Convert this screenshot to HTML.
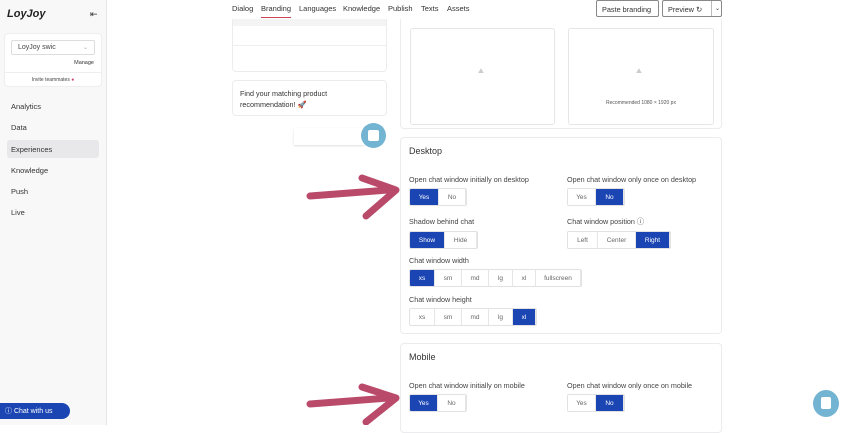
<!DOCTYPE html>
<html><head><style>
*{box-sizing:border-box;margin:0;padding:0}
body{width:848px;height:425px;overflow:hidden;background:#fff;font-family:"Liberation Sans",sans-serif;color:#333;position:relative}
.a{position:absolute;white-space:nowrap}
.side{left:0;top:0;width:107px;height:425px;background:#f8f8f9;border-right:1px solid #e6e6e8}
.card{position:absolute;background:#fff;border:1px solid #ececee;border-radius:4px}
.lbl{position:absolute;font-size:7.2px;color:#444;white-space:nowrap}
.grp{position:absolute;display:flex;height:18px;border:1px solid #e2e2e4;border-radius:2px;overflow:hidden}
.grp span{display:flex;align-items:center;justify-content:center;font-size:6.5px;color:#666;border-right:1px solid #e6e6e8;height:100%}
.grp span.on{background:#1a45b3;color:#fff}
.nav{font-size:7.5px;color:#333}
.tn{position:absolute;top:4px;font-size:7.5px;color:#333;white-space:nowrap;z-index:6}
.hdr{position:absolute;left:108px;top:0;width:740px;height:19px;background:#fff;z-index:5}
.btn{z-index:6;background:#fff}
</style></head><body>
<div class="a side">
 <div class="a" style="left:7px;top:8px;font-size:11px;font-weight:bold;font-style:italic;color:#222">LoyJoy</div>
 <div class="a" style="left:90px;top:9px;font-size:9px;color:#333">⇤</div>
 <div class="a" style="left:4px;top:33px;width:98px;height:54px;background:#fff;border:1px solid #eee;border-radius:4px">
  <div class="a" style="left:6px;top:6px;width:84px;height:15px;border:1px solid #ddd;border-radius:2px;font-size:7px;padding:3px 6px;color:#444">LoyJoy swic<span style="float:right;color:#aaa;font-size:6px">⌄</span></div>
  <div class="a" style="right:7px;top:26px;font-size:5.5px;color:#333">Manage</div>
  <div class="a" style="left:0;top:38px;width:96px;border-top:1px solid #eee;text-align:center;font-size:5px;color:#444;padding-top:4px">Invite teammates <span style="color:#c46">●</span></div>
 </div>
 <div class="a nav" style="left:11px;top:102px">Analytics</div>
 <div class="a nav" style="left:11px;top:123px">Data</div>
 <div class="a" style="left:7px;top:140px;width:92px;height:18px;background:#e8e8ea;border-radius:3px"></div>
 <div class="a nav" style="left:11px;top:145px">Experiences</div>
 <div class="a nav" style="left:11px;top:166px">Knowledge</div>
 <div class="a nav" style="left:11px;top:187px">Push</div>
 <div class="a nav" style="left:11px;top:208px">Live</div>
 <div class="a" style="left:0;top:403px;width:70px;height:16px;background:#1a45b3;border-radius:0 8px 8px 0;color:#fff;font-size:7px;padding:3px 0 0 5px">ⓘ Chat with us</div>
</div>
<div class="card" style="left:232px;top:10px;width:155px;height:62px;border-top:none"><div style="height:16px;background:#f4f4f5"></div><div style="border-top:1px solid #eee;margin-top:19px"></div></div>
<div class="card" style="left:232px;top:80px;width:155px;height:36px;font-size:7.2px;padding:7px 7px;line-height:11px;color:#333">Find your matching product recommendation! 🚀</div>
<div class="a" style="left:294px;top:128px;width:70px;height:17px;background:#fff;box-shadow:0 1px 2px #ddd"></div>
<div class="a" style="left:361px;top:123px;width:25px;height:25px;border-radius:50%;background:#72b4d2"><div class="a" style="left:7px;top:7px;width:11px;height:11px;background:#fff;border-radius:2px"></div></div>
<div class="card" style="left:400px;top:8px;width:322px;height:121px;border-top:none">
 <div class="a" style="left:9px;top:20px;width:145px;height:97px;border:1px solid #e6e6e8;border-radius:3px"><div class="a" style="left:67px;top:39px;color:#ccc;font-size:7px">⛰</div></div>
 <div class="a" style="left:167px;top:20px;width:146px;height:97px;border:1px solid #e6e6e8;border-radius:3px"><div class="a" style="left:67px;top:39px;color:#ccc;font-size:7px">⛰</div><div class="a" style="left:0;width:100%;top:71px;text-align:center;font-size:5px;color:#555">Recommended 1080 × 1920 px</div></div>
</div>
<div class="hdr"></div>
<span class="tn" style="left:232px">Dialog</span>
<span class="tn" style="left:261px;border-bottom:1px solid #c45;padding-bottom:4px">Branding</span>
<span class="tn" style="left:299px">Languages</span>
<span class="tn" style="left:343px">Knowledge</span>
<span class="tn" style="left:388px">Publish</span>
<span class="tn" style="left:421px">Texts</span>
<span class="tn" style="left:447px">Assets</span>
<div class="a btn" style="left:596px;top:0;width:63px;height:17px;border:1px solid #888;border-radius:2px;font-size:7.3px;padding:4px 5px">Paste branding</div>
<div class="a btn" style="left:662px;top:0;width:60px;height:17px;border:1px solid #888;border-radius:2px;font-size:7.3px;padding:4px 5px">Preview ↻<span style="position:absolute;left:48px;top:0;height:15px;border-left:1px solid #bbb;padding:4px 0 0 3px;font-size:6px">⌄</span></div>
<div class="card" style="left:400px;top:137px;width:322px;height:197px"></div>
<div class="a" style="left:409px;top:146px;font-size:9px;color:#333">Desktop</div>
<div class="lbl" style="left:409px;top:175px">Open chat window initially on desktop</div>
<div class="lbl" style="left:567px;top:175px">Open chat window only once on desktop</div>
<div class="grp" style="left:409px;top:188px"><span class="on" style="width:29px">Yes</span><span style="width:27px">No</span></div>
<div class="grp" style="left:567px;top:188px"><span style="width:28px">Yes</span><span class="on" style="width:28px">No</span></div>
<div class="lbl" style="left:409px;top:217px">Shadow behind chat</div>
<div class="lbl" style="left:567px;top:217px">Chat window position ⓘ</div>
<div class="grp" style="left:409px;top:231px"><span class="on" style="width:35px">Show</span><span style="width:32px">Hide</span></div>
<div class="grp" style="left:567px;top:231px"><span style="width:30px">Left</span><span style="width:38px">Center</span><span class="on" style="width:34px">Right</span></div>
<div class="lbl" style="left:409px;top:256px">Chat window width</div>
<div class="grp" style="left:409px;top:269px"><span class="on" style="width:25px">xs</span><span style="width:27px">sm</span><span style="width:27px">md</span><span style="width:24px">lg</span><span style="width:23px">xl</span><span style="width:45px">fullscreen</span></div>
<div class="lbl" style="left:409px;top:295px">Chat window height</div>
<div class="grp" style="left:409px;top:308px"><span style="width:25px">xs</span><span style="width:27px">sm</span><span style="width:27px">md</span><span style="width:24px">lg</span><span class="on" style="width:23px">xl</span></div>
<div class="card" style="left:400px;top:343px;width:322px;height:90px"></div>
<div class="a" style="left:409px;top:352px;font-size:9px;color:#333">Mobile</div>
<div class="lbl" style="left:409px;top:381px">Open chat window initially on mobile</div>
<div class="lbl" style="left:567px;top:381px">Open chat window only once on mobile</div>
<div class="grp" style="left:409px;top:394px"><span class="on" style="width:28px">Yes</span><span style="width:28px">No</span></div>
<div class="grp" style="left:567px;top:394px"><span style="width:28px">Yes</span><span class="on" style="width:28px">No</span></div>
<svg class="a" style="left:0;top:0" width="848" height="425">
<path d="M310 196 L388 190 M362 178 L396 190 L366 216" fill="none" stroke="#b94a6a" stroke-width="7" stroke-linecap="round" stroke-linejoin="round"/>
<path d="M310 404 L388 398 M362 387 L396 398 L366 422" fill="none" stroke="#b94a6a" stroke-width="7" stroke-linecap="round" stroke-linejoin="round"/>
</svg>
<div class="a" style="left:813px;top:390px;width:26px;height:27px;border-radius:50%;background:#72b4d2"><div class="a" style="left:8px;top:7px;width:10px;height:12px;background:#fff;border-radius:2px"></div></div>
</body></html>
